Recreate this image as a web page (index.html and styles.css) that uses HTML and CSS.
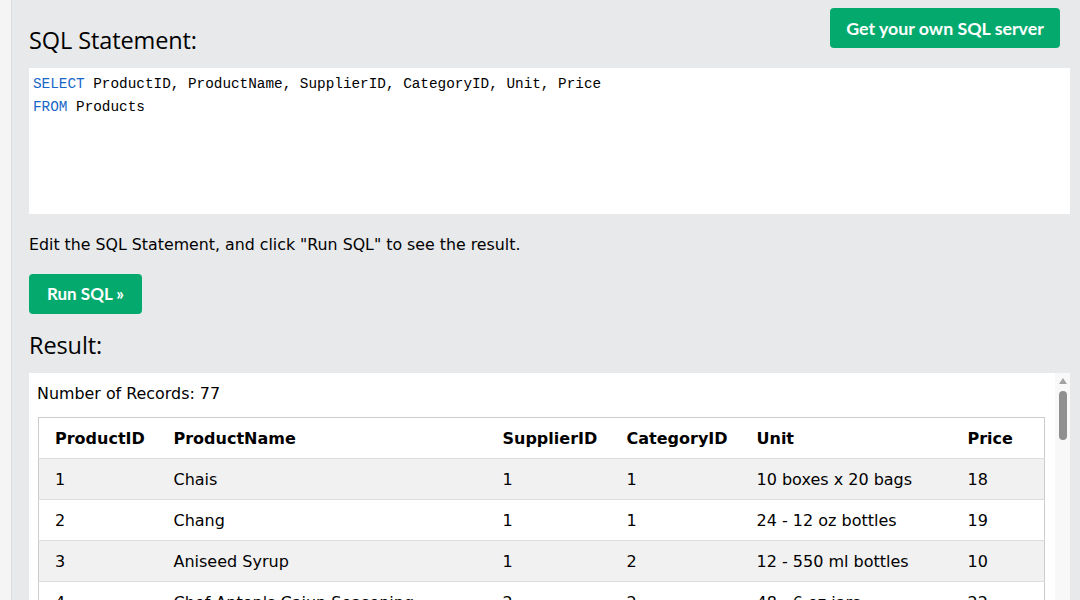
FILE: index.html
```html
<!DOCTYPE html>
<html>
<head>
<meta charset="utf-8">
<title>SQL Tryit</title>
<link rel="stylesheet" href="styles.css">
</head>
<body>
<div class="page">
  <div class="strip"></div>
  <main class="main">
    <div class="topbar">
      <h2 class="heading heading-first">SQL Statement:</h2>
      <a class="btn btn-server" href="#">Get your own SQL server</a>
    </div>
    <div class="code">
      <div><span class="kw">SELECT</span> ProductID, ProductName, SupplierID, CategoryID, Unit, Price</div>
      <div><span class="kw">FROM</span> Products</div>
    </div>
    <p class="hint">Edit the SQL Statement, and click "Run SQL" to see the result.</p>
    <a class="btn btn-run" href="#">Run SQL »</a>
    <h2 class="heading heading-result">Result:</h2>
    <div class="result">
      <div class="result-inner">
        <div class="count">Number of Records: 77</div>
        <table class="grid">
          <colgroup>
            <col class="c1"><col class="c2"><col class="c3"><col class="c4"><col class="c5"><col class="c6">
          </colgroup>
          <tr><th>ProductID</th><th>ProductName</th><th>SupplierID</th><th>CategoryID</th><th>Unit</th><th>Price</th></tr>
          <tr><td>1</td><td>Chais</td><td>1</td><td>1</td><td>10 boxes x 20 bags</td><td>18</td></tr>
          <tr><td>2</td><td>Chang</td><td>1</td><td>1</td><td>24 - 12 oz bottles</td><td>19</td></tr>
          <tr><td>3</td><td>Aniseed Syrup</td><td>1</td><td>2</td><td>12 - 550 ml bottles</td><td>10</td></tr>
          <tr><td>4</td><td>Chef Anton's Cajun Seasoning</td><td>2</td><td>2</td><td>48 - 6 oz jars</td><td>22</td></tr>
          <tr><td>5</td><td>Chef Anton's Gumbo Mix</td><td>2</td><td>2</td><td>36 boxes</td><td>21.35</td></tr>
        </table>
      </div>
      <div class="scrollbar">
        <div class="arrow"></div>
        <div class="thumb"></div>
      </div>
    </div>
  </main>
</div>
</body>
</html>
```

FILE: styles.css
```css
html, body {
  margin: 0;
  padding: 0;
  height: 100%;
  overflow: hidden;
}
body {
  background: #e7e9eb;
  color: #000;
}
.page {
  display: flex;
  height: 600px;
}
.strip {
  width: 11px;
  flex: none;
  background: #f5f5f5;
  border-right: 1px solid #dcdcdc;
}
.main {
  flex: 1;
  padding: 0 10px 0 17px;
  background: #e7e9eb;
  min-width: 0;
}
.topbar {
  display: flex;
  justify-content: space-between;
  align-items: flex-start;
  height: 68px;
}
.heading {
  font-family: "Open Sans", "Noto Sans", sans-serif;
  font-weight: 400;
  font-size: 23.5px;
  margin: 0;
  line-height: 30px;
  letter-spacing: -0.1px;
}
.heading-first {
  padding-top: 25px;
}
.btn {
  display: inline-block;
  background: #04aa6d;
  color: #fff;
  text-decoration: none;
  font-family: "Lato", "Open Sans", sans-serif;
  font-weight: 700;
  font-size: 17.8px;
  border-radius: 4px;
  height: 40px;
  line-height: 40px;
  box-sizing: border-box;
  text-align: center;
}
.btn-server {
  width: 230px;
  margin-top: 8px;
  margin-right: 10px;
}
.btn-run {
  width: 113px;
  font-size: 17px;
}
.code {
  background: #fff;
  height: 146px;
  box-sizing: border-box;
  padding: 5px 4px;
  font-family: "Liberation Mono", "DejaVu Sans Mono", monospace;
  font-size: 14.35px;
  line-height: 23px;
  color: #000;
}
.kw {
  color: #1866c7;
}
.hint {
  font-family: "DejaVu Sans", Verdana, sans-serif;
  font-size: 15.8px;
  margin: 0;
  padding-top: 20px;
  height: 40px;
  line-height: 21px;
  box-sizing: content-box;
}
.heading-result {
  margin-top: 16px;
  height: 43px;
  line-height: 30px;
}
.result {
  position: relative;
  background: #fff;
  height: 240px;
  overflow: hidden;
}
.result-inner {
  padding: 0 25px 0 8px;
}
.count {
  font-family: "DejaVu Sans", Verdana, sans-serif;
  font-size: 15.9px;
  height: 44px;
  line-height: 42px;
}
.grid {
  width: 1007px;
  margin-left: 1px;
  table-layout: fixed;
  border-collapse: collapse;
  border: 1px solid #ccc;
  font-family: "DejaVu Sans", Verdana, sans-serif;
  font-size: 16px;
}
.c1 { width: 127px; }
.c2 { width: 329px; }
.c3 { width: 124px; }
.c4 { width: 130px; }
.c5 { width: 211px; }
.c6 { width: 85px; }
.grid th, .grid td {
  text-align: left;
  padding: 0 8px;
  height: 40px;
  border-bottom: 1px solid #ddd;
  white-space: nowrap;
  overflow: hidden;
}
.grid th {
  font-weight: 700;
}
.grid th:first-child, .grid td:first-child {
  padding-left: 16px;
}
.grid tr:nth-child(even) td {
  background: #f1f1f1;
}
.scrollbar {
  position: absolute;
  top: 0;
  right: 0;
  width: 15px;
  height: 100%;
  background: #f8f8f8;
}
.arrow {
  width: 0;
  height: 0;
  margin: 5px auto 0;
  border-left: 4px solid transparent;
  border-right: 4px solid transparent;
  border-bottom: 6px solid #a3a3a3;
}
.thumb {
  width: 8px;
  height: 49px;
  margin: 7px auto 0;
  border-radius: 4px;
  background: #8f8f8f;
}
```
